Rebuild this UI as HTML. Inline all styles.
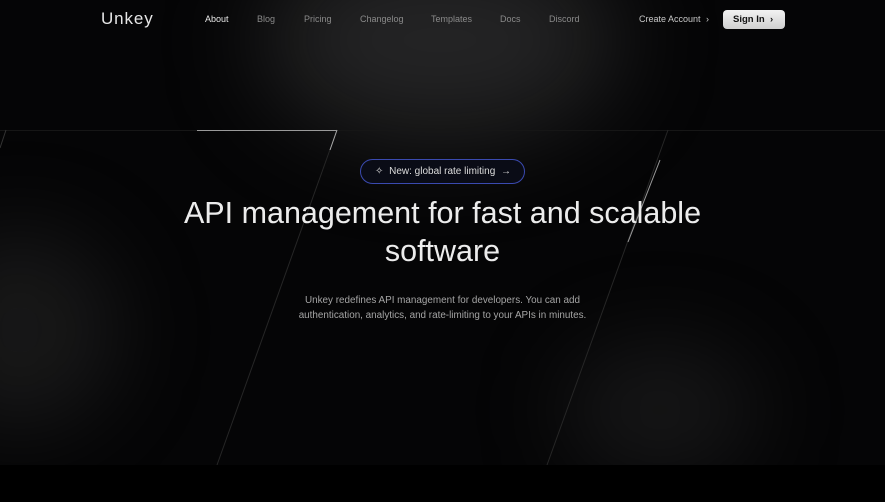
<!DOCTYPE html>
<html><head><meta charset="utf-8"><style>
*{margin:0;padding:0;box-sizing:border-box}
body{width:885px;height:502px;background:#000;overflow:hidden;font-family:"Liberation Sans",sans-serif;position:relative}
.bg{position:absolute;left:0;top:0;width:885px;height:465px;background:#050506;overflow:hidden}
.g{position:absolute;border-radius:50%;filter:blur(40px)}
.nav a{position:absolute;top:14px;font-size:9px;color:#8a8a8a;text-decoration:none}
</style></head><body>
<div class="bg">
<div class="g" style="left:260px;top:-60px;width:360px;height:200px;background:rgba(110,110,110,0.3);filter:blur(50px)"></div>
<div class="g" style="left:-80px;top:230px;width:200px;height:200px;background:rgba(90,90,90,0.22);filter:blur(45px)"></div>
<div class="g" style="left:560px;top:340px;width:200px;height:140px;background:rgba(90,90,90,0.2);filter:blur(45px)"></div>
<svg width="885" height="465" style="position:absolute;left:0;top:0">
<line x1="0" y1="130.5" x2="885" y2="130.5" stroke="#161616" stroke-width="1"/>
<line x1="197" y1="130.5" x2="337" y2="130.5" stroke="#9a9a9a" stroke-width="1"/>
<line x1="337" y1="130" x2="217" y2="465" stroke="#262626" stroke-width="1"/>
<line x1="337" y1="130" x2="330" y2="150" stroke="#aaa" stroke-width="1"/>
<line x1="668" y1="130" x2="547" y2="465" stroke="#262626" stroke-width="1"/>
<line x1="660" y1="160" x2="628" y2="242" stroke="#999" stroke-width="1"/>
<line x1="6" y1="130" x2="0" y2="148" stroke="#333" stroke-width="1"/>
</svg>
</div>
<div style="position:absolute;left:101px;top:9px;font-size:17px;color:#e6e6e6;letter-spacing:0.9px">Unkey</div>
<div class="nav">
<a style="left:205px;color:#e8e8e8">About</a><a style="left:257px">Blog</a><a style="left:304px">Pricing</a><a style="left:360px">Changelog</a><a style="left:431px">Templates</a><a style="left:500px">Docs</a><a style="left:549px">Discord</a>
<a style="left:639px;color:#c8c8c8">Create Account</a><a style="left:706px;color:#c8c8c8">›</a>
</div>
<div style="position:absolute;left:723px;top:10px;width:62px;height:19px;border-radius:4px;background:linear-gradient(#f2f2f2,#cfcfcf);color:#111;font-size:9.5px;font-weight:bold;padding:4px 0 0 10px">Sign In &nbsp;›</div>
<div style="position:absolute;left:360px;top:159px;width:165px;height:25px;border-radius:13px;border:1px solid #3a4ab0;background:#0a0c16;color:#ddd;font-size:10px;display:flex;align-items:center;padding:0 13px 0 14px;justify-content:space-between;white-space:nowrap"><span>✧</span><span>New: global rate limiting</span><span>→</span></div>
<div style="position:absolute;left:0;top:194px;width:885px;text-align:center;font-size:30.5px;line-height:38px;color:#ececec">API management for fast and scalable<br>software</div>
<div style="position:absolute;left:0;top:293px;width:885px;text-align:center;font-size:9.9px;line-height:15px;color:#a5a5a5">Unkey redefines API management for developers. You can add<br>authentication, analytics, and rate-limiting to your APIs in minutes.</div>
</body></html>
